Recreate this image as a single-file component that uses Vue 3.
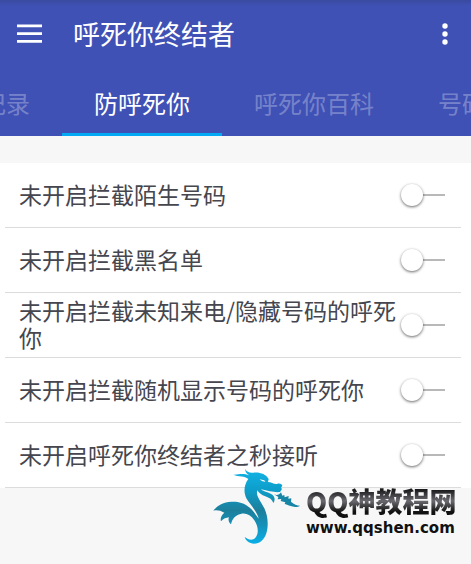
<template>
  <div class="page">
    <header class="header">
      <div class="toolbar">
        <button type="button" class="icon-btn" aria-label="菜单">
          <svg width="26" height="20" viewBox="0 0 26 20">
            <path d="M0 1.8h25M0 9.6h25M0 17.4h25" stroke="#fff" stroke-width="2.7" />
          </svg>
        </button>
        <h1 class="title">呼死你终结者</h1>
        <button type="button" class="icon-btn" aria-label="更多">
          <svg width="6" height="22" viewBox="0 0 6 22" fill="#fff">
            <circle cx="3" cy="3" r="2.7" />
            <circle cx="3" cy="11" r="2.7" />
            <circle cx="3" cy="19" r="2.7" />
          </svg>
        </button>
      </div>
      <nav class="tabs">
        <button
          v-for="tab in tabs"
          :key="tab"
          type="button"
          class="tab"
          :class="{ active: tab === activeTab }"
          @click="activeTab = tab"
        >{{ tab }}</button>
      </nav>
    </header>

    <ul class="list">
      <li v-for="item in items" :key="item.id" class="row">
        <label :for="item.id" class="row-label">{{ item.label }}</label>
        <input :id="item.id" v-model="item.on" type="checkbox" class="switch" />
      </li>
    </ul>

    <div class="watermark">
      <svg class="dragon" width="88" height="76" viewBox="36 24 264 228">
        <defs>
          <linearGradient id="dragonFill" x1="0" y1="0" x2="0" y2="1">
            <stop offset="0" stop-color="#12b4e6" />
            <stop offset="0.3" stop-color="#0d9cc8" />
            <stop offset="0.55" stop-color="#1c7f9c" />
            <stop offset="0.75" stop-color="#1590b8" />
            <stop offset="1" stop-color="#08b0e8" />
          </linearGradient>
        </defs>
        <path
          fill="url(#dragonFill)"
          d="M133 27C137 36 145 39 157 38C177 36 194 42 203 57L201 66C211 66 218 73 228 72C235 69 242 72 244 77L240 83L243 87L237 96C222 98 202 93 180 88C188 96 204 96 215 105C223 113 222 122 217 129C214 119 205 113 193 109C182 105 174 99 169 91C163 107 180 123 190 145C201 168 203 197 196 220C189 241 176 251 159 251C145 250 135 243 131 231C142 239 154 243 163 233C175 219 171 198 160 181C149 164 134 158 119 162C104 165 94 175 90 193C83 186 81 179 84 172C76 173 67 176 60 184C57 176 61 165 70 158C58 151 47 149 37 152C48 137 67 126 91 125C119 124 138 132 154 151C161 160 168 168 173 176C169 155 146 133 136 115C127 96 129 74 142 57C130 47 114 51 97 44C111 45 125 38 144 46C136 40 132 34 133 27Z"
        />
        <path fill="#f6fafc" d="M176 58C182 65 187 64 193 66L190 61Z" />
        <path
          fill="#1685a6"
          d="M219 103C227 107 234 106 240 97L244 107L250 105L251 112L263 108L262 116L271 115L270 125C279 134 288 136 297 137C288 143 280 141 272 139C264 138 259 133 251 132L253 127L239 123L241 117L230 118L232 111Z"
        />
      </svg>
      <div class="brand">
        <div class="brand-name">QQ神教程网</div>
        <div class="brand-url">www.qqshen.com</div>
      </div>
    </div>
  </div>
</template>

<script setup>
import { ref } from 'vue'

const tabs = ['记录', '防呼死你', '呼死你百科', '号码']
const activeTab = ref('防呼死你')

const items = ref([
  { id: 'stranger', label: '未开启拦截陌生号码', on: false },
  { id: 'blacklist', label: '未开启拦截黑名单', on: false },
  { id: 'hidden', label: '未开启拦截未知来电/隐藏号码的呼死你', on: false },
  { id: 'random', label: '未开启拦截随机显示号码的呼死你', on: false },
  { id: 'answer', label: '未开启呼死你终结者之秒接听', on: false }
])
</script>

<style>
body {
  background: #f7f7f7;
}
</style>

<style scoped>
.page {
  position: relative;
  min-height: 100vh;
  overflow: hidden;
  font-family: "Noto Sans CJK SC", sans-serif;
}

.header {
  background: linear-gradient(180deg, #394a9f 0, #3f51b5 6px);
  color: #fff;
}

.toolbar {
  display: flex;
  align-items: center;
  height: 68px;
  padding: 0 23px 0 17px;
}

.icon-btn {
  display: flex;
  padding: 0;
  border: none;
  background: none;
  cursor: pointer;
}

.title {
  flex: 1;
  margin: 0 0 0 30px;
  font-size: 27px;
  font-weight: 400;
  line-height: 40px;
}

/* the strip is scrolled so that the first tab is partly out of view */
.tabs {
  display: flex;
  height: 68px;
  margin-left: -50px;
  overflow: hidden;
}

.tab {
  flex: none;
  padding: 3px 32px 0;
  border: none;
  border-bottom: 3px solid transparent;
  background: none;
  color: rgba(255, 255, 255, 0.3);
  font-family: inherit;
  font-size: 24px;
  cursor: pointer;
}

.tab.active {
  border-bottom-color: #03a9f4;
  color: #fff;
}

.list {
  margin: 27px 0 0;
  padding: 0 10px 0 5px;
  list-style: none;
  background: #fff;
}

.row {
  display: flex;
  align-items: center;
  justify-content: space-between;
  height: 64px;
  padding: 0 16px 0 14px;
  border-bottom: 1px solid #dcdcdc;
}

.row-label {
  flex: 1;
  padding-bottom: 2px;
  color: #45464e;
  font-size: 23px;
  line-height: 27px;
}

.switch {
  appearance: none;
  flex: none;
  display: flex;
  align-items: center;
  width: 44px;
  height: 24px;
  margin: 0;
  background: linear-gradient(#b8b8b8, #b8b8b8) center / 100% 2px no-repeat;
  cursor: pointer;
}

.switch::before {
  content: "";
  width: 22px;
  height: 22px;
  border-radius: 50%;
  background: #fff;
  box-shadow: 0 1px 3px rgba(0, 0, 0, 0.6);
}

.switch:checked {
  justify-content: flex-end;
}

.watermark {
  position: absolute;
  right: 15px;
  bottom: 20px;
  display: flex;
  align-items: center;
  gap: 5px;
  pointer-events: none;
}

.brand {
  width: 150px;
  padding-top: 8px;
  white-space: nowrap;
}

.brand-name {
  background: linear-gradient(180deg, #1c1c1e 20%, #6a6a70 50%, #111 80%);
  background-clip: text;
  color: transparent;
  font-size: 27px;
  font-weight: 900;
  line-height: 36px;
}

.brand-url {
  color: #111;
  font-family: "DejaVu Sans", sans-serif;
  font-size: 15px;
  font-weight: 700;
  line-height: 18px;
}
</style>
